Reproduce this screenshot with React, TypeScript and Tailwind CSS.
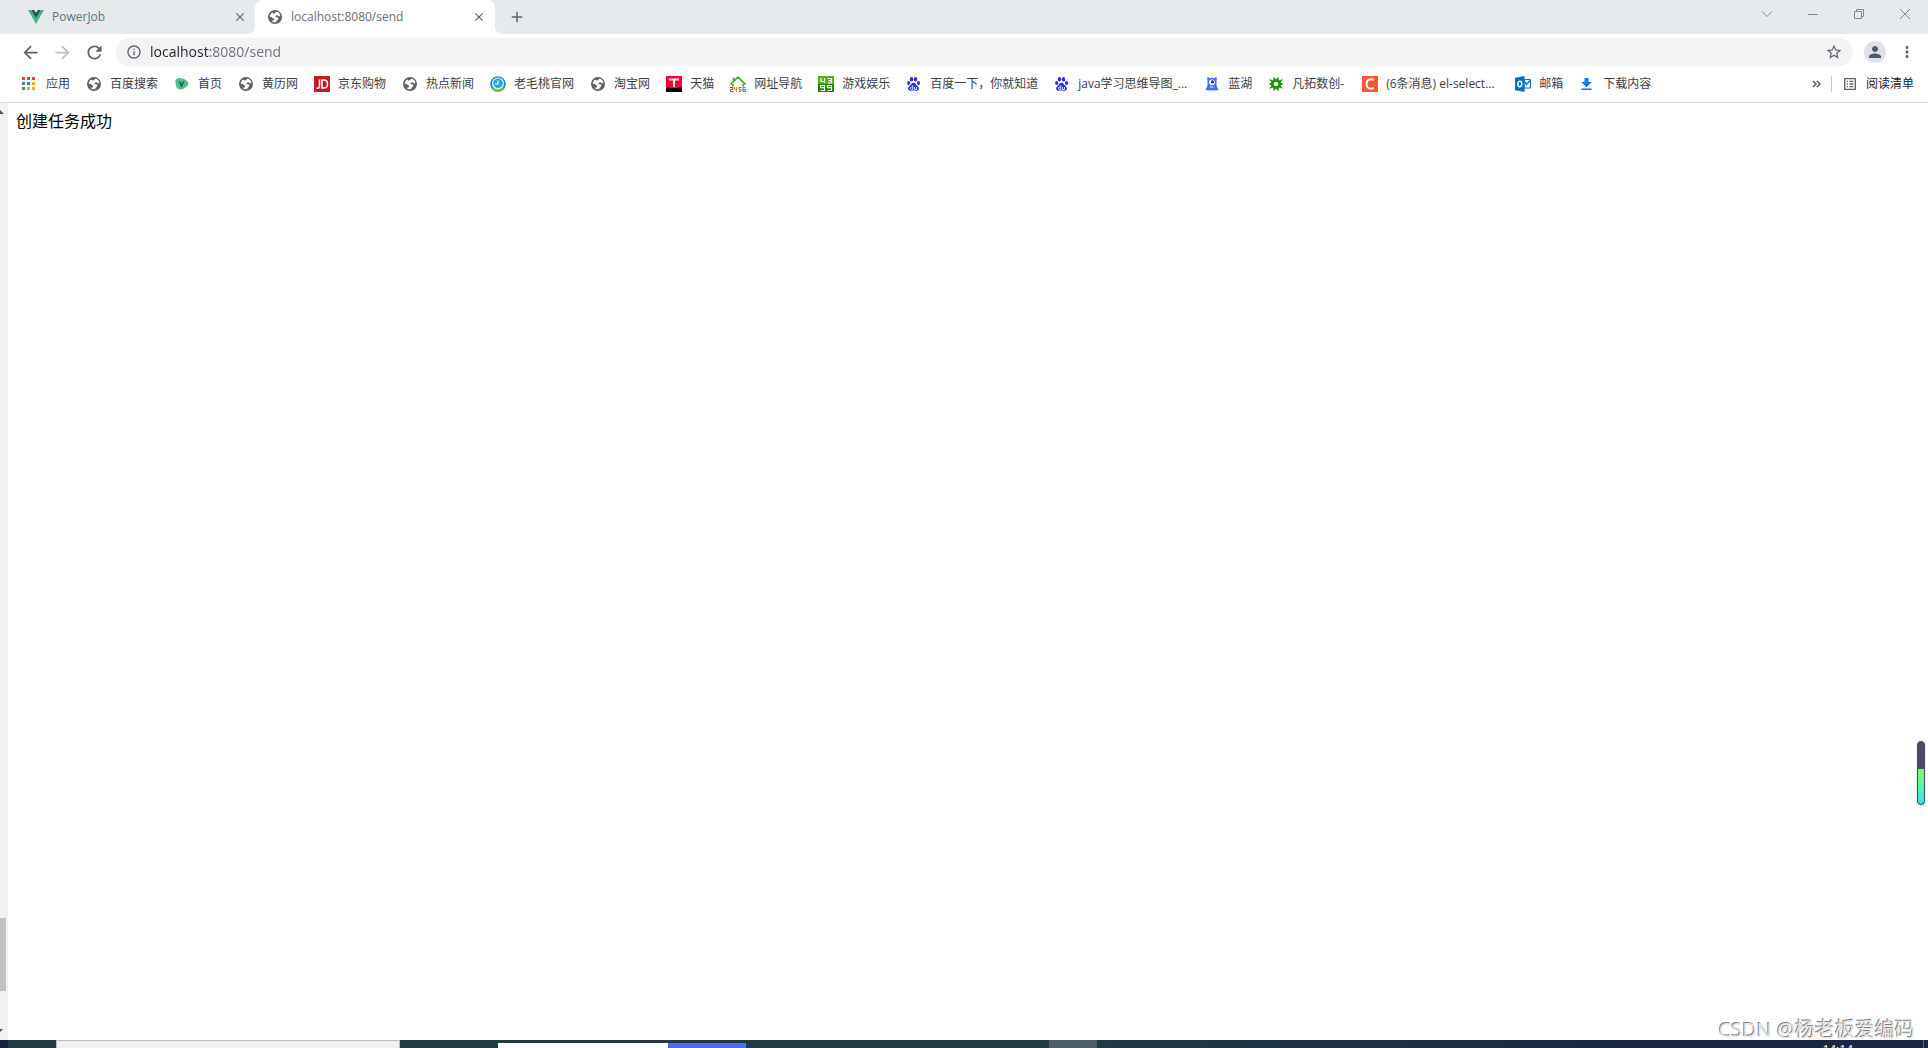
import type { ReactNode } from 'react';
import {
  MdAdd,
  MdArrowBack,
  MdArrowForward,
  MdClose,
  MdMoreVert,
  MdOutlineInfo,
  MdOutlineListAlt,
  MdPerson,
  MdRefresh,
  MdStarBorder,
} from 'react-icons/md';

type Bookmark = {
  title: string;
  icon: ReactNode;
  width?: string;
};

const GlobeIcon = () => (
  <svg viewBox="0 0 16 16" className="size-4">
    <circle cx="8" cy="8" r="7" fill="#5f6368" />
    <path
      d="M9.500 2.800C11.800 3 13.200 4.800 13.300 7c-.6.7-1.800.2-2.300-.6-1-.5-1.800.2-2.400.8-.3.900.5 1 1.400 1.100 1.500.2 1.600 1.700.8 2.500-1 .6-1.200 2-2.200 2.500-1.600.2-3.200-.4-4.200-1.500 1.300.1 2.600-.2 2.800-1.200.1-1.100-1-1.200-1.700-1.800-.7-.8-1.500-1.200-2.700-1.100C2.900 6 3.900 4.500 5.200 3.600c.5.8 1.200 1.200 2 1 .900-.3 1-1.400 2.300-1.800z"
      fill="#fff"
    />
  </svg>
);

const VueIcon = () => (
  <svg viewBox="0 0 16 16" className="size-4">
    <path d="M0 1h3.200L8 9.300 12.800 1H16L8 15z" fill="#41b883" />
    <path d="M3.200 1h3L8 4.100 9.800 1h3L8 9.300z" fill="#35495e" />
  </svg>
);

const AppsIcon = () => (
  <svg viewBox="0 0 16 16" className="size-4">
    <path d="M0 1h3v3H0zM5 1h3v3H5zM10 1h3v3h-3z" fill="#ea4335" />
    <path d="M0 6h3v3H0zM0 11h3v3H0z" fill="#34a05a" />
    <path d="M5 6h3v3H5z" fill="#2a80f0" />
    <path d="M10 6h3v3h-3zM5 11h3v3H5zM10 11h3v3h-3z" fill="#f9ab00" />
  </svg>
);

const LeafIcon = () => (
  <svg viewBox="0 0 16 16" className="size-4">
    <path d="M1.500 7C1 4 2.500 2 5.500 2c4 0 8.800 2.800 8.800 5.500 0 2.500-4 5.800-7.800 6C3 13.500 2 11 1.500 7z" fill="#4fc08d" />
    <path d="M5.500 5.500 7.500 10l2-4.500" fill="none" stroke="#2c5a56" strokeWidth="1.600" />
  </svg>
);

const JdIcon = () => (
  <svg viewBox="0 0 16 16" className="size-4">
    <path d="M0 0h16v16H0z" fill="#c81623" />
    <path d="M5.500 3.500V10q0 2.500-3 2.300M8 4v8h2q3.500 0 3.500-4T10 4z" fill="none" stroke="#fff" strokeWidth="1.500" />
  </svg>
);

const PeachIcon = () => (
  <svg viewBox="0 0 16 16" className="size-4">
    <circle cx="8" cy="8" r="7.800" fill="#2187cf" />
    <path d="M.8 11a7.800 7.800 0 0 0 14.400 0q-7 4-14.400 0" fill="#7cbf3a" />
    <circle cx="8" cy="7.500" r="6" fill="#e9f6fb" />
    <circle cx="8" cy="7.300" r="4.800" fill="#27a5df" />
    <path d="M8 4.500V8H5" fill="none" stroke="#fff" strokeWidth="1.200" />
  </svg>
);

const TmallIcon = () => (
  <svg viewBox="0 0 16 16" className="size-4">
    <path d="M0 0h16v16H0z" fill="#ff0036" />
    <path d="M0 16v-3.500l2-1.500 2 1h8l2-1 2 1.500V16z" fill="#000" />
    <path d="M3 3.500h10M8 3.500V11" fill="none" stroke="#fff" strokeWidth="2" />
  </svg>
);

const HouseIcon = () => (
  <svg viewBox="0 0 16 16" className="size-4">
    <path d="M.5 8.500 8 1.200l7.500 7.300M3.500 5V1.500M3 8v2.500M13 8v2.500" fill="none" stroke="#43a82c" strokeWidth="1.700" />
    <path d="M0 11.500h3v2H.5v2H3.500" fill="none" stroke="#e03020" strokeWidth="1" />
    <path d="M4.500 11v2.500H7.500M6.500 11v5" fill="none" stroke="#f08519" strokeWidth="1" />
    <path d="M11.500 11.500H9v2h2v2H8.500" fill="none" stroke="#3aa02a" strokeWidth="1" />
    <path d="M15.500 11.500H13v4h2.500v-2H13" fill="none" stroke="#2a86d8" strokeWidth="1" />
  </svg>
);

const GamesIcon = () => (
  <svg viewBox="0 0 16 16" className="size-4">
    <path d="M0 0h16v16H0z" fill="#5aad0e" />
    <path d="M0 8h16v8H0z" fill="#1b8009" />
    <path
      d="M3 2v3.500h4M6.500 2v5M9.500 2.500h4v4.500h-4M10.500 4.700h3M6.500 11.700h-4v-2.200h4v5h-4M13.500 11.700h-4v-2.200h4v5h-4"
      fill="none"
      stroke="#fff"
      strokeWidth="1.200"
    />
  </svg>
);

const PawIcon = () => (
  <svg viewBox="0 0 16 16" className="size-4" fill="#2932e1">
    <ellipse cx="5.500" cy="3.300" rx="1.700" ry="2.300" />
    <ellipse cx="9.500" cy="3.300" rx="1.700" ry="2.300" />
    <ellipse cx="2.700" cy="7" rx="1.600" ry="2" />
    <ellipse cx="12.500" cy="7" rx="1.600" ry="2" />
    <path d="M7.500 6.800c2 0 2.500 2 4 3.300 2.800 2.700 1 5-1.500 4.700-1.600-.4-3.400-.4-5 0-2.500.3-4.300-2-1.500-4.700C5 8.800 5.500 6.800 7.500 6.800z" />
    <path d="M6.800 9.500v4H5.300q-1-.1-1-1.200t1-1.200h1.500M8.500 11v2.500h2V11" fill="none" stroke="#fff" strokeWidth=".8" />
  </svg>
);

const LanhuIcon = () => (
  <svg viewBox="0 0 16 16" className="size-4">
    <path
      d="M3.500 1c.8 0 1.400.5 1.800 1.200Q8 1.200 10.700 2.200C11.100 1.500 11.700 1 12.500 1q.6 1.500 0 3.500V9q0 2.500 2 4.500-.8 1.200-2.500.5-1.500 1-2.700 0-1.300 1-2.600 0-1.200 1-2.700 0-1.700.7-2.500-.5 2-2 2-4.500V4.500q-.6-2 0-3.500z"
      fill="#4a6cf7"
    />
    <circle cx="8" cy="6.300" r="2.900" fill="#fff" />
    <circle cx="8.500" cy="5.900" r="1.600" fill="#26356f" />
    <path d="M6 11h3.500" stroke="#fff" strokeWidth=".9" />
  </svg>
);

const GearIcon = () => (
  <svg viewBox="0 0 16 16" className="size-4">
    <path
      d="M8 3.500 10.500.8l.3 3.600L14.800 3l-2.300 3.500L15.500 8l-3 1.300 2.300 3.500-4-1.200-.3 3.700L8 12.500l-2.500 2.800-.3-3.700-4 1.200 2.300-3.500L.5 8l3-1.500L1.200 3l4 1.400.3-3.600z"
      fill="#16900f"
    />
    <circle cx="8" cy="8" r="2.300" fill="#fff" />
  </svg>
);

const CsdnIcon = () => (
  <svg viewBox="0 0 16 16" className="size-4">
    <path d="M0 0h16v16H0z" fill="#fc5531" />
    <path d="M12 4.200Q10.500 3.300 9 3.300 4.700 3.500 4.500 8q.2 4.400 4 4.700 2 0 3.300-1" fill="none" stroke="#fff" strokeWidth="1.900" />
  </svg>
);

const OutlookIcon = () => (
  <svg viewBox="0 0 16 16" className="size-4">
    <path d="M9 3.500h6.500v8.500H9z" fill="#fff" stroke="#0072c6" />
    <path d="M9 5l2.500 3.500 4-4.500" fill="none" stroke="#0072c6" strokeWidth="1.300" />
    <path d="M0 1.800 9.500 0v16L0 14.200z" fill="#0072c6" />
    <ellipse cx="4.800" cy="8" rx="2" ry="2.700" fill="none" stroke="#fff" strokeWidth="1.500" />
  </svg>
);

const DownloadIcon = () => (
  <svg viewBox="0 0 16 16" className="size-4" fill="#1a73e8">
    <path d="M5.500 2h4v4h3.300L7.500 11.300 2.200 6h3.300zM2.500 12.500h10V14h-10z" />
  </svg>
);

const BOOKMARKS: Bookmark[] = [
  { title: '应用', icon: <AppsIcon /> },
  { title: '百度搜索', icon: <GlobeIcon /> },
  { title: '首页', icon: <LeafIcon /> },
  { title: '黄历网', icon: <GlobeIcon /> },
  { title: '京东购物', icon: <JdIcon /> },
  { title: '热点新闻', icon: <GlobeIcon /> },
  { title: '老毛桃官网', icon: <PeachIcon /> },
  { title: '淘宝网', icon: <GlobeIcon /> },
  { title: '天猫', icon: <TmallIcon /> },
  { title: '网址导航', icon: <HouseIcon /> },
  { title: '游戏娱乐', icon: <GamesIcon /> },
  { title: '百度一下，你就知道', icon: <PawIcon /> },
  { title: 'java学习思维导图_...', icon: <PawIcon />, width: 'w-[110px]' },
  { title: '蓝湖', icon: <LanhuIcon /> },
  { title: '凡拓数创-', icon: <GearIcon />, width: 'w-[54px]' },
  { title: '(6条消息) el-select...', icon: <CsdnIcon />, width: 'w-[113px]' },
  { title: '邮箱', icon: <OutlookIcon /> },
  { title: '下载内容', icon: <DownloadIcon /> },
];

const Tab = ({ title, icon, active = false }: { title: string; icon: ReactNode; active?: boolean }) => (
  <div
    className={
      active
        ? "relative -ml-px flex h-full w-60 items-center rounded-t-lg bg-white pr-2 pl-3 before:absolute before:bottom-0 before:-left-2 before:size-2 before:bg-[radial-gradient(circle_at_0_0,transparent_8px,white_8px)] before:content-[''] after:absolute after:-right-2 after:bottom-0 after:size-2 after:bg-[radial-gradient(circle_at_100%_0,transparent_8px,white_8px)] after:content-['']"
        : 'flex h-full w-60 items-center pr-2 pl-3'
    }
  >
    <button type="button" role="tab" aria-selected={active} className="flex min-w-0 grow items-center gap-2 text-xs text-[#6b6e72]">
      {icon}
      <span className="truncate">{title}</span>
    </button>
    <button type="button" aria-label="关闭标签页" className="grid size-4 place-items-center text-[#5f6368]">
      <MdClose className="size-3.5" />
    </button>
  </div>
);

const WindowButton = ({ label, d }: { label: string; d: string }) => (
  <button type="button" aria-label={label} className="grid h-7 w-[46px] place-items-center">
    <svg viewBox="0 0 12 12" className="size-3" fill="none" stroke="#85888b">
      <path d={d} />
    </svg>
  </button>
);

const TabStrip = () => (
  <header className="flex h-[34px] items-start bg-[#e6eaed] pl-4">
    <div role="tablist" className="flex h-full">
      <Tab title="PowerJob" icon={<VueIcon />} />
      <Tab title="localhost:8080/send" icon={<GlobeIcon />} active />
    </div>
    <button type="button" aria-label="打开新的标签页" className="ml-3 grid h-full w-5 place-items-center text-[#5f6368]">
      <MdAdd className="size-[18px]" />
    </button>
    <div className="ml-auto flex">
      <WindowButton label="搜索标签页" d="M1 3.500l5 5 5-5" />
      <WindowButton label="最小化" d="M1 6.500h10" />
      <WindowButton label="还原" d="M1.500 3.500h7v7h-7zM3.500 3.500v-2h7v7h-2" />
      <WindowButton label="关闭" d="M1 1l10 10M11 1L1 11" />
    </div>
  </header>
);

const Toolbar = () => (
  <div className="flex h-9 items-center pr-3 pl-[14px] text-[#5f6368]">
    <button type="button" aria-label="后退" className="grid w-8 place-items-center">
      <MdArrowBack className="size-[21px]" />
    </button>
    <button type="button" aria-label="前进" className="grid w-8 place-items-center text-[#bdc0c3]">
      <MdArrowForward className="size-[21px]" />
    </button>
    <button type="button" aria-label="重新加载" className="grid w-8 place-items-center">
      <MdRefresh className="size-[21px]" />
    </button>
    <div className="ml-1.5 flex h-7 grow items-center rounded-full bg-[#f1f3f4] pr-2.5 pl-2.5">
      <MdOutlineInfo className="size-4 shrink-0" />
      <input
        aria-label="地址栏"
        defaultValue="localhost:8080/send"
        className="ml-2 h-6 grow bg-[linear-gradient(to_right,#202124_60px,#6b6e72_60px)] bg-clip-text pb-0.5 text-sm text-transparent outline-none"
      />
      <button type="button" aria-label="为此标签页添加书签">
        <MdStarBorder className="size-[18px]" />
      </button>
    </div>
    <button type="button" aria-label="用户" className="ml-[11px] grid size-[22px] place-items-center rounded-full bg-[#dee1e6]">
      <MdPerson className="size-[18px] text-[#4d5a70]" />
    </button>
    <button type="button" aria-label="菜单" className="ml-3 grid w-[18px] place-items-center">
      <MdMoreVert className="size-[18px]" />
    </button>
  </div>
);

const BookmarkBar = () => (
  <nav className="flex h-[33px] items-start border-b border-[#dadce0] pr-[14px] pl-[22px] text-xs text-[#3c4043]">
    <div className="flex h-7 items-center gap-4">
      {BOOKMARKS.map(({ title, icon, width = '' }) => (
        <a key={title} href="#" className="flex items-center gap-2 whitespace-nowrap">
          {icon}
          <span className={width}>{title}</span>
        </a>
      ))}
    </div>
    <div className="ml-auto flex h-7 items-center">
      <button type="button" aria-label="更多书签">
        <svg viewBox="0 0 10 10" className="size-2.5" fill="none" stroke="#5f6368" strokeWidth="1.600">
          <path d="M1 2l3 3-3 3M5 2l3 3-3 3" />
        </svg>
      </button>
      <span className="ml-[9px] h-4 w-px bg-[#c8cbce]" />
      <button type="button" className="ml-2.5 flex items-center gap-2 text-[#202124]">
        <MdOutlineListAlt className="size-4 text-[#5f6368]" />
        阅读清单
      </button>
    </div>
  </nav>
);

const Scrollbar = () => (
  <div className="flex w-2 shrink-0 flex-col bg-[#f1f1f1]">
    <svg viewBox="0 0 8 18" className="h-[18px] w-2 shrink-0" fill="#505050">
      <path d="M0 7l4 4H0z" />
    </svg>
    <div className="grow-[798]" />
    <div className="h-[73px] w-1.5 bg-[#c1c1c1]" />
    <div className="grow-[31]" />
    <svg viewBox="0 0 8 18" className="h-[18px] w-2 shrink-0" fill="#505050">
      <path d="M0 7h3L0 10z" />
    </svg>
  </div>
);

const Taskbar = () => (
  <footer className="flex h-2 overflow-hidden bg-[linear-gradient(to_right,#213a44_55%,#192742_85%)]">
    <div className="w-2 bg-[#18223f]" />
    <div className="ml-12 w-[344px] border border-b-0 border-[#bdbdbd] bg-[#f0f0f0]" />
    <div className="mt-[3px] ml-[98px] w-[170px] bg-white" />
    <div className="mt-[3px] w-[78px] bg-[#4e6ef2]" />
    <div className="ml-[303px] w-12 bg-[#4b5d67]" />
    <time className="mt-0.5 mr-[70px] ml-auto text-xs text-white">14:14</time>
    <div className="mr-1 w-px bg-[#59647a]" />
  </footer>
);

export default function App() {
  return (
    <div className="relative flex min-h-screen flex-col bg-white font-['Open_Sans','Noto_Sans_CJK_SC',sans-serif]">
      <TabStrip />
      <Toolbar />
      <BookmarkBar />
      <div className="flex grow">
        <Scrollbar />
        <main className="grow px-2 py-1.5 text-base text-black">创建任务成功</main>
      </div>
      <Taskbar />
      <div className="absolute right-[3px] bottom-[243px] flex h-16 w-2 flex-col overflow-hidden rounded-full border border-[#4b4a67] bg-[#4b4a67] ring-1 ring-[#f0f0f2]">
        <div className="mt-auto h-[35px] rounded-b-full bg-linear-to-b from-[#7dfb4a] to-[#25e6f5]" />
      </div>
      <p className="absolute right-[13px] bottom-1 text-xl whitespace-nowrap text-[#e4e4e4] [text-shadow:-1px_-1px_0_#808080]">
        CSDN @杨老板爱编码
      </p>
    </div>
  );
}
